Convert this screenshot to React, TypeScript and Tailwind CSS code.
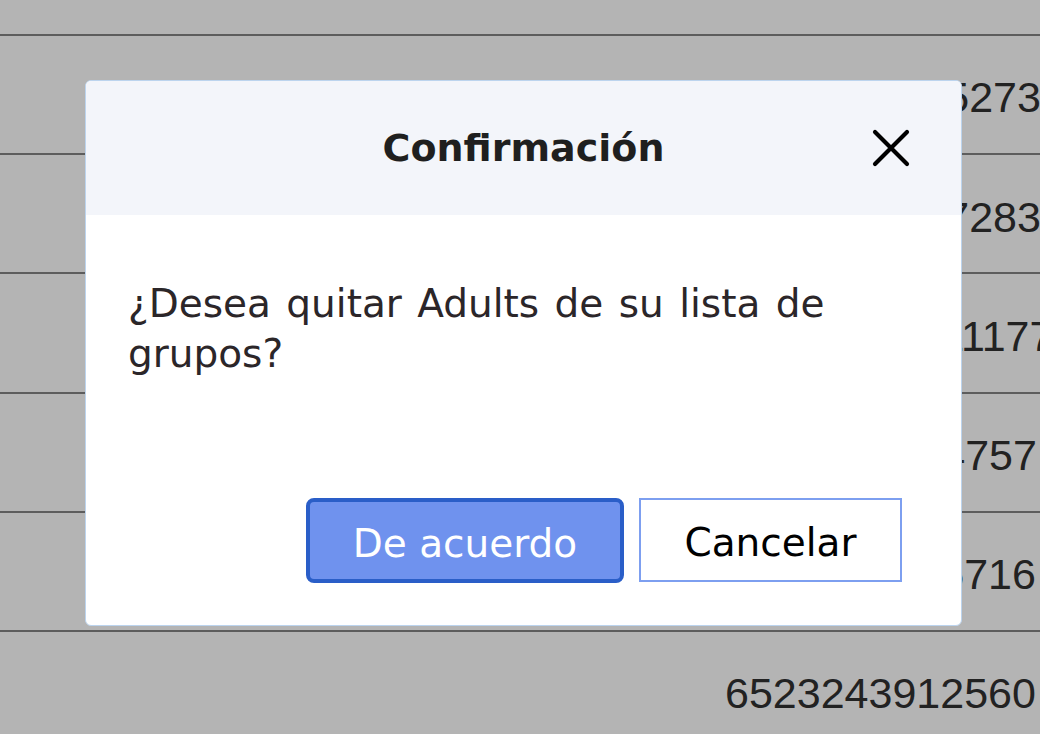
import React from "react";

const rows = [
  { n: "6523243875273", pad: "pl-[730px]" },
  { n: "6523243887283", pad: "pl-[730px]" },
  { n: "65232439011177", pad: "pl-[725px]" },
  { n: "6523243944757", pad: "pl-[726px]" },
  { n: "6523243955716", pad: "pl-[725px]" },
  { n: "6523243912560", pad: "pl-[725px]" },
];

export default function App() {
  return (
    <div className="relative w-[1040px] h-[734px] overflow-hidden bg-[#b4b4b4]">
      <div className="flex flex-col">
        <div className="h-[34px]" />
        {rows.map((r) => (
          <div
            key={r.n}
            className={`h-[119.2px] shrink-0 border-t-2 border-[#5d5d5d] flex items-center ${r.pad} pt-[6px] whitespace-nowrap text-[43px] text-[#222] [font-family:'Liberation_Sans',Arial,sans-serif]`}
          >
            {r.n}
          </div>
        ))}
      </div>

      <div className="absolute left-[85px] top-[80px] w-[877px] h-[546px] flex flex-col rounded-[6px] overflow-hidden border-[1.5px] border-[#bcd4ee] bg-white [font-family:'DejaVu_Sans',sans-serif]">
        <div className="relative h-[134px] shrink-0 bg-[#f3f5fa] flex items-center justify-center">
          <h1 className="text-[38px] font-bold text-[#1f1f1f] leading-none">Confirmación</h1>
          <button className="absolute right-[50px] top-1/2 -translate-y-1/2 w-[40px] h-[40px] flex items-center justify-center">
            <svg width="40" height="40" viewBox="0 0 40 40">
              <path d="M4 4 L36 36 M36 4 L4 36" stroke="#000" strokeWidth="4.2" strokeLinecap="round" fill="none" />
            </svg>
          </button>
        </div>
        <div className="px-[42px] pt-[64px] text-[39px] leading-[50px] [word-spacing:3px] text-[#2b2629]">
          ¿Desea quitar Adults de su lista de grupos?
        </div>
        <div className="mt-auto flex justify-end gap-[15px] pr-[59px] pb-[42px]">
          <button className="w-[318px] h-[85px] rounded-[8px] border-4 border-[#2a5ec8] bg-[#6f92ee] pt-[5px] text-white text-[39px] leading-none">
            De acuerdo
          </button>
          <button className="w-[263px] h-[84px] border-2 border-[#7d9ff0] bg-white pt-[5px] text-black text-[39px] leading-none">
            Cancelar
          </button>
        </div>
      </div>
    </div>
  );
}
